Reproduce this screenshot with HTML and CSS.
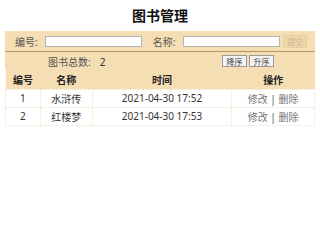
FILE: index.html
```html
<!DOCTYPE html>
<html lang="zh">
<head>
    <meta charset="UTF-8">
    <title>图书管理</title>
    <link rel="stylesheet" href="styles.css">
</head>
<body>
    <div class="container">
        <h3 class="title">图书管理</h3>

        <div class="panel">
            <form class="search-row">
                <label class="field-label">编号:</label>
                <input type="text" class="field-input">
                <label class="field-label name-label">名称:</label>
                <input type="text" class="field-input">
                <button type="button" class="submit-btn" disabled>提交</button>
            </form>
            <div class="count-row">
                <span class="count">图书总数:<span class="count-num">2</span></span>
                <div class="sort-btns">
                    <button type="button" class="sort-btn">降序</button>
                    <button type="button" class="sort-btn">升序</button>
                </div>
            </div>
        </div>

        <table class="book-table">
            <thead>
                <tr>
                    <th class="col-id">编号</th>
                    <th class="col-name">名称</th>
                    <th class="col-time">时间</th>
                    <th class="col-op">操作</th>
                </tr>
            </thead>
            <tbody>
                <tr>
                    <td>1</td>
                    <td>水浒传</td>
                    <td>2021-04-30 17:52</td>
                    <td class="op"><a>修改</a> | <a>删除</a></td>
                </tr>
                <tr>
                    <td>2</td>
                    <td>红楼梦</td>
                    <td>2021-04-30 17:53</td>
                    <td class="op"><a>修改</a> | <a>删除</a></td>
                </tr>
            </tbody>
        </table>
    </div>
</body>
</html>
```

FILE: styles.css
```css
* {
    margin: 0;
    padding: 0;
    box-sizing: border-box;
}

body {
    background: #fff;
    font-family: "Noto Sans", "Noto Sans CJK SC", sans-serif;
    font-size: 10px;
    color: #333;
}

.container {
    width: 310px;
    margin: 0 auto;
}

.title {
    height: 31px;
    line-height: 31px;
    text-align: center;
    font-size: 14px;
    font-weight: bold;
    color: #111;
}

.panel {
    background: #f5deb3;
}

.search-row {
    display: flex;
    align-items: center;
    height: 21px;
    padding: 0 8px 0 10px;
    border-bottom: 1px solid #b9935f;
}

.field-label {
    color: #555;
    width: 30px;
}

.name-label {
    margin-left: 11px;
    width: 31px;
}

.field-input {
    width: 97px;
    height: 11px;
    border: 1px solid #b5b5b5;
    background: #fff;
}

.submit-btn {
    margin-left: 3px;
    width: 24px;
    height: 13px;
    font-family: inherit;
    font-size: 8px;
    color: #c9b89a;
    background: #eed6aa;
    border: 1px solid #e8cfa0;
}

.count-row {
    display: flex;
    align-items: center;
    height: 18px;
    padding-left: 43px;
}

.count {
    color: #555;
}

.count-num {
    margin-left: 9px;
    color: #333;
}

.sort-btns {
    display: flex;
    gap: 2px;
    margin-left: auto;
    margin-right: 41px;
}

.sort-btn {
    width: 25px;
    height: 12px;
    font-family: inherit;
    font-size: 8px;
    color: #444;
    background: #f3f3f3;
    border: 1px solid #999;
}

.book-table {
    width: 100%;
    border-collapse: collapse;
}

.book-table th {
    height: 19px;
    background: #f5deb3;
    font-weight: bold;
    color: #222;
}

.book-table td {
    height: 18px;
    text-align: center;
    border: 1px dotted #f0e2c6;
}

.col-id { width: 35px; }
.col-name { width: 52px; }
.col-time { width: 140px; }
.col-op { width: 83px; }

.op {
    color: #555;
}

.op a {
    color: #777;
}
```
